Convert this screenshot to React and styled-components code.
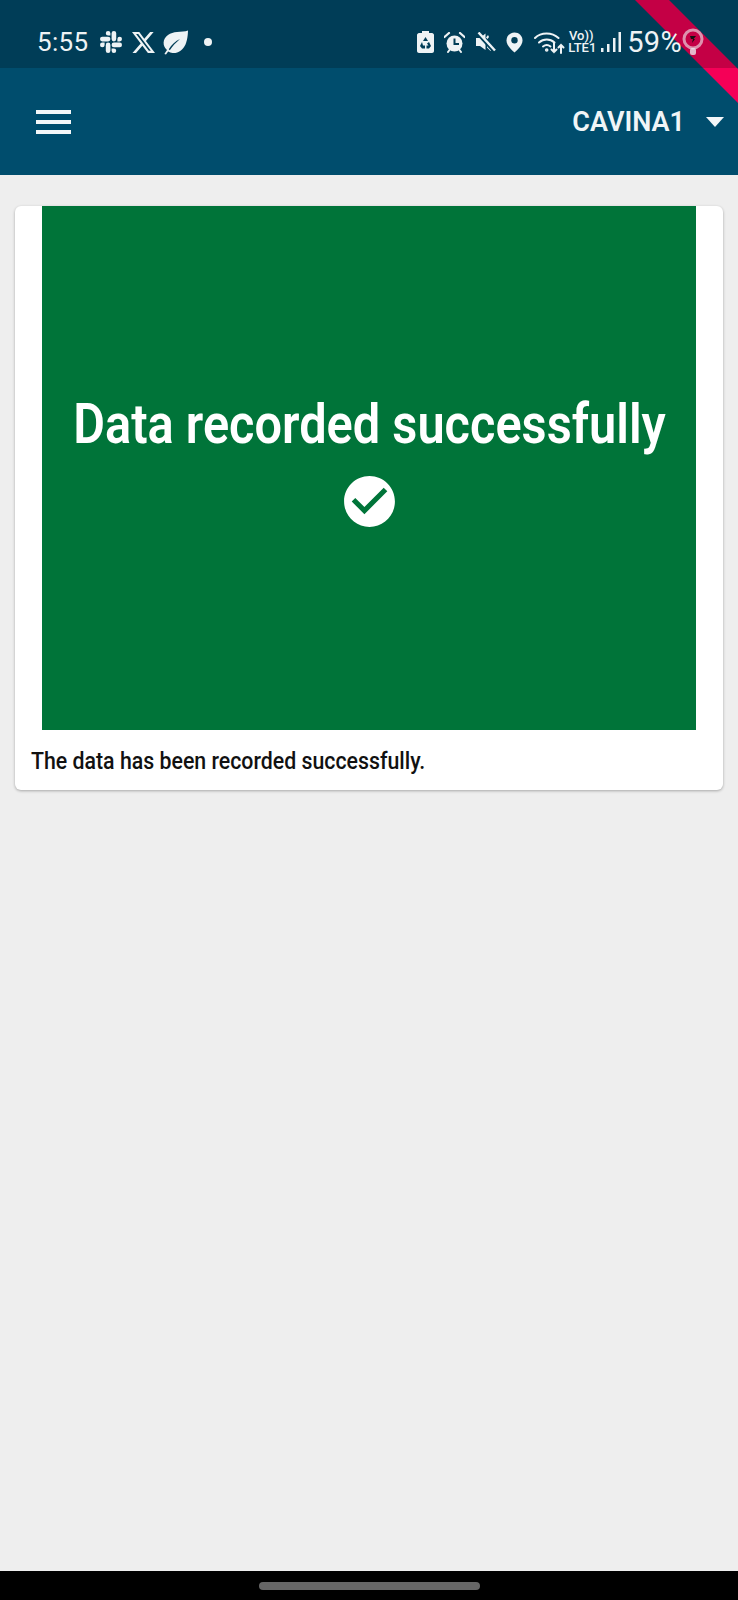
import React from 'react';
import styled, { createGlobalStyle } from 'styled-components';
import { SiSlack, SiX } from 'react-icons/si';
import { MdCheckCircle } from 'react-icons/md';

const GlobalStyle = createGlobalStyle`
    html, body {
        margin: 0;
        padding: 0;
        background: #eeeeee;
        font-family: Roboto, "Liberation Sans", sans-serif;
    }
    * {
        box-sizing: border-box;
    }
`;

const Page = styled.div`
    position: relative;
    display: flex;
    flex-direction: column;
    width: 738px;
    height: 1600px;
    overflow: hidden;
    background: #eeeeee;
`;

const Header = styled.header`
    display: flex;
    flex-direction: column;
    height: 175px;
    background: #004d6d;
`;

const StatusBar = styled.div`
    position: relative;
    z-index: 2;
    display: flex;
    align-items: center;
    justify-content: space-between;
    height: 68px;
    padding: 16px 34px 0 37px;
    background: rgba(0, 0, 0, 0.2);
    color: #eef3f5;
`;

const StatusGroup = styled.div`
    display: flex;
    align-items: center;
`;

const Clock = styled.span`
    width: 63px;
    font-size: 26px;
    letter-spacing: 0.3px;
`;

const StatusIcon = styled.span`
    display: flex;
    width: ${(p) => p.$w}px;
    margin-right: ${(p) => p.$gap || 0}px;
    justify-content: center;

    svg {
        display: block;
        flex-shrink: 0;
    }
`;

const Dot = styled.span`
    width: 8px;
    height: 8px;
    margin-left: 16px;
    border-radius: 50%;
    background: #eef3f5;
`;

const Lte = styled.span`
    display: flex;
    flex-direction: column;
    width: 26px;
    margin-right: 7px;
    font-size: 13px;
    font-weight: 500;
    line-height: 12px;
    text-align: center;
    white-space: nowrap;
`;

const Battery = styled.span`
    margin-left: 6px;
    font-size: 29px;
    letter-spacing: 0.3px;
`;

const Ribbon = styled.div`
    position: absolute;
    z-index: 1;
    top: 30px;
    left: 599px;
    width: 190px;
    height: 24px;
    background: #f50057;
    transform: rotate(45deg);
`;

const AppBar = styled.div`
    position: relative;
    z-index: 2;
    display: flex;
    flex: 1;
    align-items: center;
    justify-content: space-between;
    padding: 0 14px 0 36px;
`;

const Hamburger = styled.div`
    display: flex;
    flex-direction: column;
    gap: 6px;
    width: 35px;

    span {
        height: 4px;
        background: #f3f7f9;
    }
`;

const Station = styled.div`
    display: flex;
    align-items: center;
    gap: 21px;
    color: #f0f5f7;
    font-size: 27px;
    font-weight: 600;
`;

const Caret = styled.span`
    width: 0;
    height: 0;
    border-left: 9px solid transparent;
    border-right: 9px solid transparent;
    border-top: 10px solid #f3f7f9;
`;

const Content = styled.main`
    flex: 1;
    padding: 31px 15px 0;
`;

const Card = styled.section`
    height: 584px;
    border-radius: 6px;
    overflow: hidden;
    background: #ffffff;
    box-shadow: 0 1px 3px rgba(0, 0, 0, 0.3);
`;

const Banner = styled.div`
    display: flex;
    flex-direction: column;
    align-items: center;
    justify-content: center;
    gap: 14px;
    height: 524px;
    margin: 0 27px;
    padding-bottom: 14px;
    background: #007439;
    color: #ffffff;
`;

const BannerTitle = styled.h1`
    margin: 0;
    font-size: 56px;
    font-weight: 600;
    line-height: 66px;
    white-space: nowrap;
    transform: scaleX(0.87);
`;

const CheckBadge = styled.span`
    display: flex;
    svg {
        display: block;
    }
`;

const Caption = styled.p`
    margin: 0;
    padding: 16px 0 0 18px;
    color: #111111;
    font-size: 24px;
    font-weight: 500;
    line-height: 30px;
    white-space: nowrap;
    transform: scaleX(0.888);
    transform-origin: left center;
`;

const NavBar = styled.div`
    display: flex;
    justify-content: center;
    height: 29px;
    padding-top: 11px;
    background: #000000;
`;

const NavPill = styled.span`
    width: 221px;
    height: 8px;
    border-radius: 4px;
    background: #666666;
`;

const LeafIcon = () => (
    <svg width="25" height="25" viewBox="0 0 25 25" fill="currentColor">
        <path d="M25 0.5C25 0.5 25 9 22.5 14.5C20 20 15 23.5 9.5 23C8 22.9 6.5 22.4 5.2 21.6L3 24.6L1.4 24C2.2 22.6 3 21.4 4 20C2 18 0.4 15.5 0.6 12.5C1 6 7.5 2.5 14 2C18 1.6 22 1.6 25 0.5ZM17 9C12.5 11 8.5 15 5.8 19.2L6.8 20.2C9.5 16 13 12.5 17 9Z" fillRule="evenodd" />
    </svg>
);

const BatterySaverIcon = () => (
    <svg width="17" height="22" viewBox="0 0 17 22" fill="currentColor">
        <path d="M5 0H12V2H15C16 2 17 3 17 4V20C17 21 16 22 15 22H2C1 22 0 21 0 20V4C0 3 1 2 2 2H5ZM8.5 6L6 10H11ZM5 11L3 15L5 17.5H8V14.5H6ZM12 11L10 12.5L11.5 14.5H9.5V17.5H12L14 15Z" fillRule="evenodd" />
    </svg>
);

const AlarmIcon = () => (
    <svg width="21" height="21" viewBox="0 0 21 21">
        <circle cx="10.5" cy="11.5" r="8" fill="currentColor" />
        <path d="M0.5 5L5 1" stroke="currentColor" strokeWidth="2.2" strokeLinecap="round" />
        <path d="M20.5 5L16 1" stroke="currentColor" strokeWidth="2.2" strokeLinecap="round" />
        <path d="M4 20L5.5 18M17 20L15.5 18" stroke="currentColor" strokeWidth="2" strokeLinecap="round" />
        <path d="M10.5 6.5V12H15" fill="none" stroke="#003e57" strokeWidth="2" />
    </svg>
);

const MuteIcon = () => (
    <svg width="21" height="20" viewBox="0 0 21 20" fill="currentColor">
        <path d="M1 6H5L10.5 1.5V18L5 14H1Z" />
        <path d="M13 3L11 5.5L12.5 7L14 5ZM14.5 11L12 12V15.5L15.5 19L17 17Z" />
        <path d="M1.5 1L18.5 19.5" stroke="#003e57" strokeWidth="2.4" />
        <path d="M3.5 0.5L20 18.5" stroke="currentColor" strokeWidth="2.4" />
    </svg>
);

const PinIcon = () => (
    <svg width="17" height="21" viewBox="0 0 17 21">
        <path d="M8.5 0.5C4 0.5 0.5 4 0.5 8.5C0.5 13 5 17.5 8.5 20.5C12 17.5 16.5 13 16.5 8.5C16.5 4 13 0.5 8.5 0.5Z" fill="currentColor" />
        <circle cx="8.5" cy="8.3" r="3.2" fill="#003e57" />
    </svg>
);

const WifiIcon = () => (
    <svg width="31" height="23" viewBox="0 0 31 23" fill="none" stroke="currentColor" strokeWidth="2" strokeLinecap="round">
        <path d="M1 7C7 1 18 1 24.5 7" />
        <path d="M5 11.5C9.5 7.5 16 7.5 20.5 11.5" />
        <path d="M9 15.5C11.5 13.5 14 13.5 16.5 15.5" />
        <circle cx="12.7" cy="19" r="0.8" />
        <path d="M20 12V21M17.5 18.5L20 21L22.5 18.5" />
        <path d="M27 22V14M24.5 16.5L27 14L29.5 16.5" />
    </svg>
);

const SignalIcon = () => (
    <svg width="20" height="21" viewBox="0 0 20 21" fill="currentColor">
        <rect x="0" y="16" width="2.5" height="4" />
        <rect x="6" y="12" width="2.5" height="8" />
        <rect x="12" y="6" width="2.5" height="14" />
        <rect x="17.5" y="0" width="2.5" height="20" />
    </svg>
);

const ChargeIcon = () => (
    <svg width="24" height="28" viewBox="0 0 24 28">
        <circle cx="12" cy="11" r="9" fill="none" stroke="rgba(238,243,245,0.6)" strokeWidth="3" />
        <rect x="9" y="20" width="6" height="7" rx="2" fill="rgba(238,243,245,0.75)" />
        <path d="M9 8H15L12.5 11H14L11 15L12 11H10Z" fill="#111111" />
    </svg>
);

function App() {
    return (
        <Page>
            <GlobalStyle />
            <Ribbon />
            <Header>
                <StatusBar>
                    <StatusGroup>
                        <Clock>5:55</Clock>
                        <StatusIcon $w={22} $gap={10}><SiSlack size={22} /></StatusIcon>
                        <StatusIcon $w={23} $gap={8}><SiX size={23} /></StatusIcon>
                        <StatusIcon $w={25}><LeafIcon /></StatusIcon>
                        <Dot />
                    </StatusGroup>
                    <StatusGroup>
                        <StatusIcon $w={17} $gap={10}><BatterySaverIcon /></StatusIcon>
                        <StatusIcon $w={21} $gap={10}><AlarmIcon /></StatusIcon>
                        <StatusIcon $w={21} $gap={10}><MuteIcon /></StatusIcon>
                        <StatusIcon $w={17} $gap={11}><PinIcon /></StatusIcon>
                        <StatusIcon $w={31} $gap={3}><WifiIcon /></StatusIcon>
                        <Lte><span>Vo))</span><span>LTE1</span></Lte>
                        <StatusIcon $w={20}><SignalIcon /></StatusIcon>
                        <Battery>59%</Battery>
                        <StatusIcon $w={22}><ChargeIcon /></StatusIcon>
                    </StatusGroup>
                </StatusBar>
                <AppBar>
                    <Hamburger><span /><span /><span /></Hamburger>
                    <Station>
                        CAVINA1
                        <Caret />
                    </Station>
                </AppBar>
            </Header>
            <Content>
                <Card>
                    <Banner>
                        <BannerTitle>Data recorded successfully</BannerTitle>
                        <CheckBadge><MdCheckCircle size={61} /></CheckBadge>
                    </Banner>
                    <Caption>The data has been recorded successfully.</Caption>
                </Card>
            </Content>
            <NavBar><NavPill /></NavBar>
        </Page>
    );
}

export default App;
